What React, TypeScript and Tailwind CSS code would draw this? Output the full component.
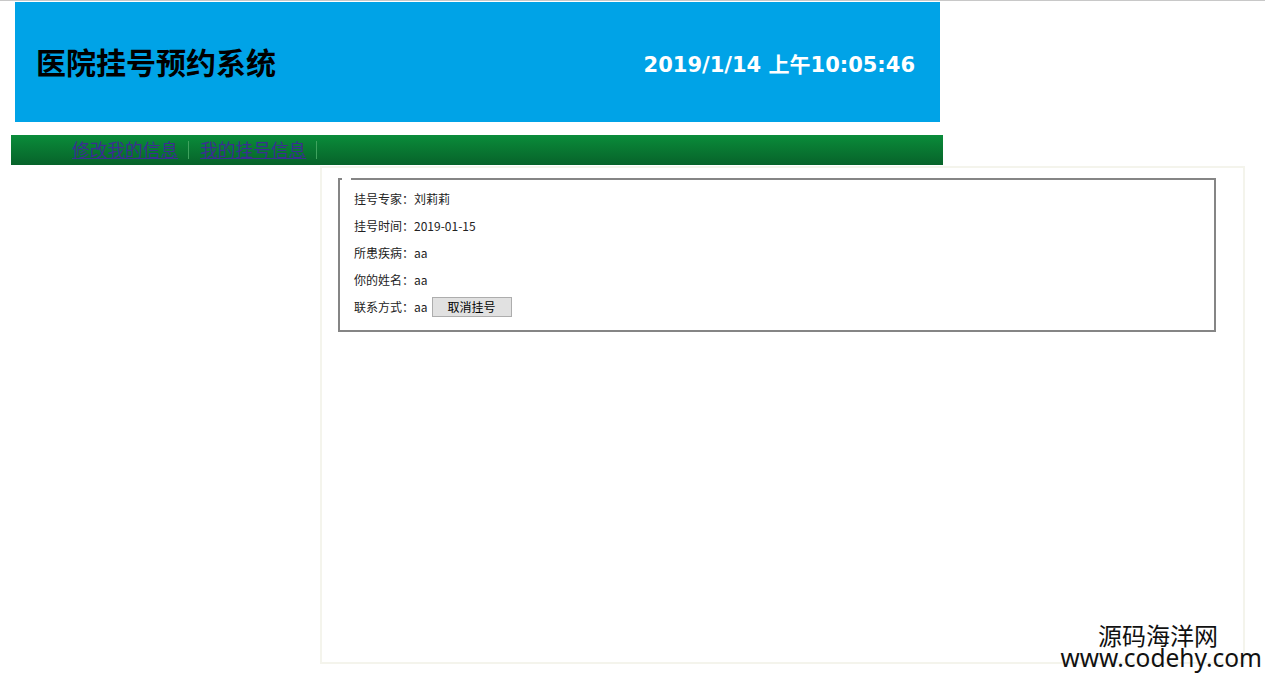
export default function App() {
  const cjk = { fontFamily: '"Noto Sans CJK SC", "Noto Sans", sans-serif' };

  const rows: { label: string; value: string }[] = [
    { label: "挂号专家：", value: "刘莉莉" },
    { label: "挂号时间：", value: "2019-01-15" },
    { label: "所患疾病：", value: "aa" },
    { label: "你的姓名：", value: "aa" },
  ];

  return (
    <div className="relative min-h-[677px] w-full border-t border-[#c8c8c8] bg-white" style={cjk}>
      {/* 头部 */}
      <div className="ml-[15px] mt-[1px] flex h-[120px] w-[925px] items-center justify-between bg-[#00a3e7] pl-[21px] pr-[25px]">
        <h1 className="mb-[2px] text-[30px] font-bold leading-none text-black">医院挂号预约系统</h1>
        <div
          className="mt-[6px] text-[21px] font-bold leading-none text-white"
          style={{ fontFamily: '"DejaVu Sans", "Noto Sans CJK SC", sans-serif' }}
        >
          2019/1/14 上午10:05:46
        </div>
      </div>

      {/* 导航 */}
      <div className="ml-[11px] mt-[13px] flex h-[30px] w-[932px] items-center bg-gradient-to-b from-[#0a8c3a] to-[#07632a] pl-[61px]">
        <a href="#" className="pr-[10px] text-[17.7px] leading-none text-[#3b2e92] underline">
          修改我的信息
        </a>
        <span className="h-[18px] w-px bg-[#3fa35e]" />
        <a href="#" className="pl-[11px] pr-[10px] text-[17.7px] leading-none text-[#3b2e92] underline">
          我的挂号信息
        </a>
        <span className="h-[18px] w-px bg-[#3fa35e]" />
      </div>

      {/* 内容 */}
      <div className="ml-[320px] mt-[1px] h-[498px] w-[925px] border-2 border-[#f4f4ec] pl-[16px] pt-[10px]">
        <fieldset className="w-[878px] border-2 border-[#858585] pb-[10px] pl-[14px] pt-[5px]">
          <legend className="-ml-[12px] h-0 w-[9px]" />
          {rows.map((r) => (
            <div key={r.label} className="flex h-[27px] items-center text-[12px] text-[#222]">
              {r.label}
              {r.value}
            </div>
          ))}
          <div className="flex h-[27px] items-center text-[12px] text-[#222]">
            联系方式：aa
            <button className="ml-[4px] h-[20px] w-[80px] border border-[#adadad] bg-[#e1e1e1] text-[12px] leading-none text-black">
              取消挂号
            </button>
          </div>
        </fieldset>
      </div>

      {/* 水印 */}
      <div className="absolute right-[3px] top-[622px] flex flex-col items-end leading-none text-[#111]">
        <span className="mr-[44px] text-[24px] leading-[24px]">源码海洋网</span>
        <span className="text-[24.5px] leading-[22px]" style={{ fontFamily: '"Noto Sans", sans-serif' }}>
          www.codehy.com
        </span>
      </div>
    </div>
  );
}
